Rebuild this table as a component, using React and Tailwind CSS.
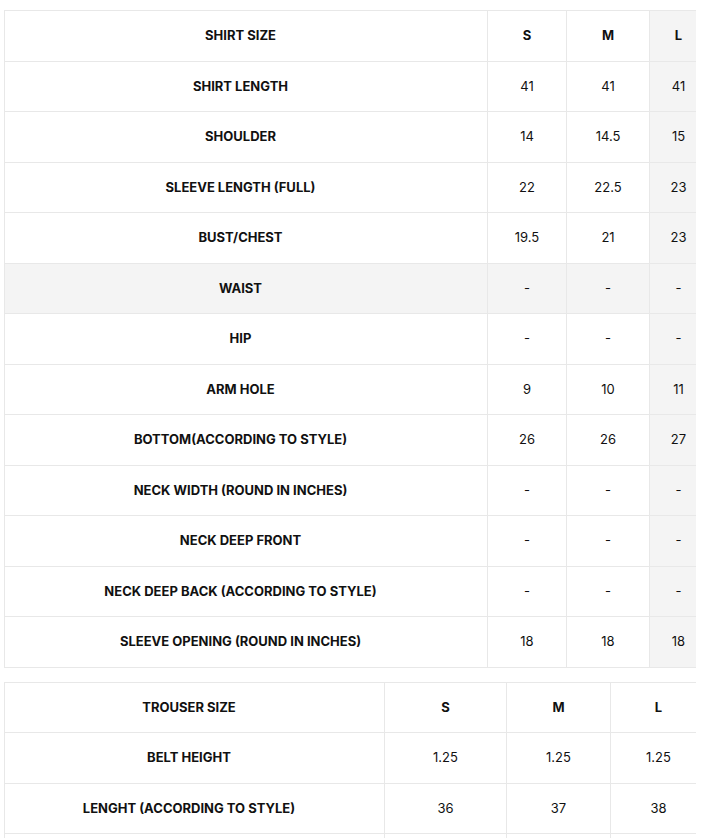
const shirtRows = [
  ['SHIRT LENGTH', '41', '41', '41'],
  ['SHOULDER', '14', '14.5', '15'],
  ['SLEEVE LENGTH (FULL)', '22', '22.5', '23'],
  ['BUST/CHEST', '19.5', '21', '23'],
  ['WAIST', '-', '-', '-'],
  ['HIP', '-', '-', '-'],
  ['ARM HOLE', '9', '10', '11'],
  ['BOTTOM(ACCORDING TO STYLE)', '26', '26', '27'],
  ['NECK WIDTH (ROUND IN INCHES)', '-', '-', '-'],
  ['NECK DEEP FRONT', '-', '-', '-'],
  ['NECK DEEP BACK (ACCORDING TO STYLE)', '-', '-', '-'],
  ['SLEEVE OPENING (ROUND IN INCHES)', '18', '18', '18'],
];

const trouserRows = [
  ['BELT HEIGHT', '1.25', '1.25', '1.25'],
  ['LENGHT (ACCORDING TO STYLE)', '36', '37', '38'],
  ['BOTTOM', '8', '8.5', '9'],
];

const cell = 'border border-[#e8e8e8] h-[50.5px] p-0 text-center align-middle';

// tabla de medidas, recortada por el contenedor a la derecha
const SizeTable = ({ title, rows, widths, grayCol, grayRow }) => (
  <div className="w-[692px] ml-[4px] overflow-hidden">
    <table className="border-collapse table-fixed text-[13px] text-[#111]" style={{ width: widths.reduce((a, b) => a + b, 0) }}>
      <colgroup>
        {widths.map((w, i) => <col key={i} style={{ width: w }} />)}
      </colgroup>
      <tbody>
        <tr>
          <td className={`${cell} font-bold pr-[11px]`}>{title}</td>
          <td className={`${cell} font-bold`}>S</td>
          <td className={`${cell} font-bold`}>M</td>
          <td className={`${cell} font-bold ${grayCol ? 'bg-[#f4f4f4]' : ''}`}>L</td>
        </tr>
        {rows.map((r) => {
          const g = r[0] === grayRow;
          return (
            <tr key={r[0]} className={g ? 'bg-[#f4f4f4]' : ''}>
              <td className={`${cell} font-bold pr-[11px]`}>{r[0]}</td>
              <td className={cell}>{r[1]}</td>
              <td className={cell}>{r[2]}</td>
              <td className={`${cell} ${grayCol ? 'bg-[#f4f4f4]' : ''}`}>{r[3]}</td>
            </tr>
          );
        })}
      </tbody>
    </table>
  </div>
);

export default function App() {
  return (
    <div className="bg-white min-h-screen pt-[10px] font-['Inter','Liberation_Sans',sans-serif]">
      <SizeTable title="SHIRT SIZE" rows={shirtRows} widths={[483, 79, 83, 58]} grayCol grayRow="WAIST" />
      <div className="h-[14px]" />
      <SizeTable title="TROUSER SIZE" rows={trouserRows} widths={[380, 122, 104, 96]} />
    </div>
  );
}
